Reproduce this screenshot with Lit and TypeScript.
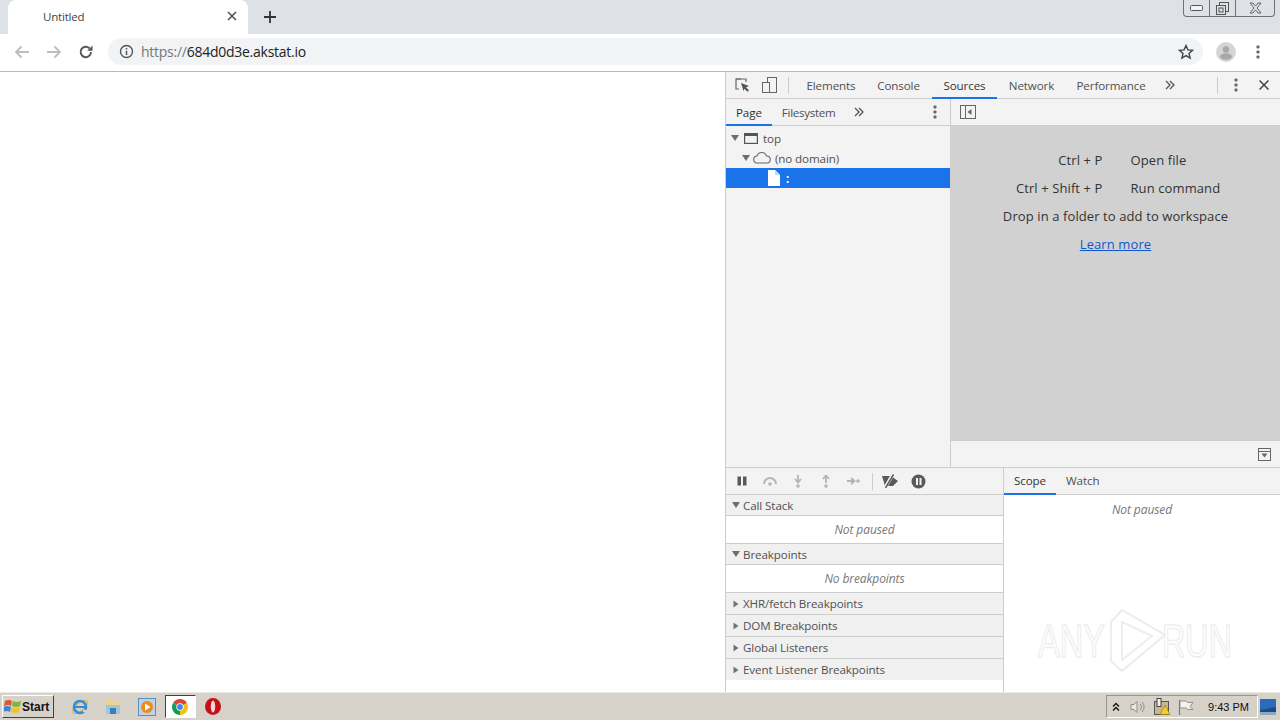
import { LitElement, html, css, svg } from "lit";
import { customElement } from "lit/decorators.js";

const triDown = html`<svg class="tri" width="8" height="8" viewBox="0 0 8 8"><path d="M0 1h8L4 7z" fill="#6e6e6e"/></svg>`;
const triRight = html`<svg class="tri" width="8" height="8" viewBox="0 0 8 8"><path d="M1.5 0.5v7L6.5 4z" fill="#727272"/></svg>`;
const dots = html`<svg width="4" height="14" viewBox="0 0 4 14"><g fill="#666"><rect x="0.5" y="0.5" width="3" height="3" rx="1"/><rect x="0.5" y="5.5" width="3" height="3" rx="1"/><rect x="0.5" y="10.5" width="3" height="3" rx="1"/></g></svg>`;
const chevrons = html`<svg width="10" height="10" viewBox="0 0 10 10"><path d="M1 1l4 4-4 4M5 1l4 4-4 4" fill="none" stroke="#555" stroke-width="1.3"/></svg>`;

const sections = [
  { label: "Call Stack", open: true, body: "Not paused" },
  { label: "Breakpoints", open: true, body: "No breakpoints" },
  { label: "XHR/fetch Breakpoints", open: false },
  { label: "DOM Breakpoints", open: false },
  { label: "Global Listeners", open: false },
  { label: "Event Listener Breakpoints", open: false },
];

const mainTabs = [
  { label: "Elements", w: 68 },
  { label: "Console", w: 67 },
  { label: "Sources", w: 65, on: true },
  { label: "Network", w: 69 },
  { label: "Performance", w: 90 },
];

@customElement("app-root")
export class AppRoot extends LitElement {
  static styles = css`
    :host { display: block; width: 1280px; height: 720px; overflow: hidden; position: relative; background: #fff;
      font-family: "Open Sans", "Noto Sans", sans-serif; font-size: 12px; color: #333; }
    .app { display: flex; flex-direction: column; height: 720px; }
    svg { display: block; flex: none; }

    .tabstrip { height: 34px; background: #dee1e6; display: flex; align-items: stretch; padding-left: 8px; flex: none; }
    .tab { width: 240px; background: #fff; border-radius: 8px 8px 0 0; display: flex; align-items: center; box-sizing: border-box; padding: 0 11px 2px 35px; color: #444; font-size: 11.5px; letter-spacing: -0.2px; }
    .tab span { flex: 1; }
    .newtab { margin-left: 16px; align-self: center; }

    .toolbar { height: 35px; padding-bottom: 2px; flex: none; background: #fff; border-bottom: 1px solid #b9b9b9; display: flex; align-items: center; padding-left: 14px; box-sizing: content-box; }
    .nav { display: flex; align-items: center; gap: 16px; }
    .omni { margin-left: 14px; width: 1095px; height: 27px; border-radius: 14px; background: #f1f3f4; display: flex; align-items: center; padding: 0 9px 0 11px; box-sizing: border-box; font-size: 14px; letter-spacing: -0.26px; color: #222; gap: 7px; }
    .omni .url { flex: 1; }
    .omni .url i { font-style: normal; color: #777; }
    .acct { margin-left: 13px; }
    .menu { margin-left: 20px; }

    .main { flex: 1; display: flex; min-height: 0; }
    .page { flex: 1; background: #fff; }
    .devtools { width: 555px; flex: none; border-left: 1px solid #cdcdcd; box-sizing: border-box; display: flex; flex-direction: column; background: #f3f3f3; color: #505050; font-size: 11.6px; letter-spacing: -0.1px; }

    .dt-top { height: 27px; flex: none; border-bottom: 1px solid #cdcdcd; box-sizing: border-box; display: flex; align-items: stretch; }
    .ico { display: flex; align-items: center; }
    .dt-icons { width: 62px; padding-left: 9px; gap: 12px; box-sizing: border-box; flex: none; }
    .sep { width: 1px; height: 17px; background: #ccc; align-self: center; flex: none; }
    .tabs { display: flex; align-items: stretch; }
    .t { display: flex; align-items: center; justify-content: center; padding: 1px 11px 0; box-sizing: border-box; border-bottom: 2px solid transparent; margin-bottom: -1px; white-space: nowrap; }
    .t.on { border-bottom-color: #1a73e8; color: #333; }
    .dt-tabs { margin-left: 8px; }
    .dt-tabs .t { padding: 1px 0 0; }
    .push { flex: 1; }
    .more { display: flex; align-items: center; padding: 0 0 0 9px; }
    .dt-end { display: flex; align-items: center; padding-right: 11px; }
    .dt-end .sep { margin-right: 16px; }
    .dt-end .x { margin-left: 21px; }

    .upper { height: 369px; flex: none; display: flex; border-bottom: 1px solid #cdcdcd; box-sizing: border-box; }
    .navigator { width: 224px; flex: none; border-right: 1px solid #cdcdcd; box-sizing: content-box; display: flex; flex-direction: column; }
    .subbar { height: 27px; flex: none; border-bottom: 1px solid #cdcdcd; box-sizing: border-box; display: flex; align-items: stretch; }
    .subbar .t { padding: 1px 10px 0; }
    .subbar .t.fs { letter-spacing: -0.3px; }
    .subbar .more { padding-left: 9px; }
    .subbar .dots { display: flex; align-items: center; padding-right: 13px; }
    .tree { padding-top: 2px; display: flex; flex-direction: column; }
    .row { height: 20px; display: flex; align-items: center; white-space: nowrap; }
    .row.r1 { padding-left: 5px; gap: 5px; }
    .row.r2 { padding-left: 16px; gap: 3px; }
    .row.r2 span { margin-left: 1px; }
    .row.sel { background: #1a73e8; color: #fff; padding-left: 42px; gap: 6px; font-weight: 700; }

    .editor { flex: 1; display: flex; flex-direction: column; min-width: 0; }
    .edbar { padding-left: 9px; align-items: center; }
    .welcome { flex: 1; background: #d1d1d1; display: flex; flex-direction: column; align-items: center; padding-top: 20px; color: #333; font-size: 13px; letter-spacing: 0.1px; }
    .shortcuts { display: grid; grid-template-columns: 127px 125px; column-gap: 28px; }
    .shortcuts div { height: 28px; line-height: 28px; white-space: nowrap; }
    .shortcuts .k { text-align: right; }
    .drop { height: 28px; line-height: 28px; }
    .learn { height: 28px; line-height: 28px; color: #1155cc; text-decoration: underline; }
    .edfoot { height: 27px; flex: none; border-top: 1px solid #cdcdcd; box-sizing: border-box; display: flex; align-items: center; justify-content: flex-end; padding-right: 9px; }

    .lower { flex: 1; display: flex; min-height: 0; }
    .left { width: 277px; flex: none; border-right: 1px solid #cdcdcd; display: flex; flex-direction: column; background: #fff; }
    .debugbar { height: 27px; flex: none; background: #f3f3f3; border-bottom: 1px solid #cdcdcd; box-sizing: border-box; display: flex; align-items: center; padding-left: 2px; }
    .debugbar .b { width: 28px; display: flex; justify-content: center; flex: none; }
    .debugbar .sep { margin: 0 3px 0 4px; }
    .sec { height: 22px; flex: none; box-sizing: border-box; background: #f0f0f0; border-bottom: 1px solid #cdcdcd; display: flex; align-items: center; padding-left: 6px; gap: 3px; color: #505050; }
    .sec.short { height: 21px; }
    .secbody { height: 28px; flex: none; box-sizing: border-box; background: #fff; border-bottom: 1px solid #cdcdcd; display: flex; align-items: center; justify-content: center; padding-bottom: 1px; font-style: italic; color: #777; font-size: 12px; }
    .sec.last { border-bottom: none; height: 21px; }
    .right { flex: 1; background: #fff; display: flex; flex-direction: column; }
    .rbar { height: 27px; flex: none; background: #f3f3f3; border-bottom: 1px solid #cdcdcd; box-sizing: border-box; display: flex; align-items: stretch; }
    .rbar .t { padding: 0 10px; }
    .rnote { text-align: center; font-style: italic; color: #777; font-size: 12px; padding-top: 6px; }

    .taskbar { height: 28px; flex: none; background: #d6d2c9; border-top: 1px solid #eceae4; box-sizing: border-box; display: flex; align-items: center; padding-left: 2px; color: #111; }
    .start { width: 52px; height: 23px; box-sizing: border-box; background: #d6d2c9; border: 1px solid; border-color: #fff #404040 #404040 #fff; display: flex; align-items: center; gap: 0; padding-left: 1px; font-family: "Liberation Sans", sans-serif; font-weight: 700; font-size: 12px; }
    .quick { display: flex; align-items: center; margin-left: 9px; gap: 0; }
    .q { width: 33.5px; display: flex; justify-content: center; }
    .q.active { width: 31px; height: 23px; margin: 0 1px; background: #fff; border: 1px solid; border-color: #404040 #fff #fff #404040; box-sizing: border-box; align-items: center; }
    .tray { margin-left: auto; width: 152px; height: 23px; border: 1px solid; border-color: #99958c #fff #fff #99958c; box-sizing: border-box; display: flex; align-items: center; padding-left: 5px; font-family: "Liberation Sans", sans-serif; font-size: 11px; }
    .tray .clock { margin-left: auto; padding-right: 8px; }
    .tray .speaker { margin-left: 10px; }
    .tray .net { margin-left: 8px; }
    .tray .flag { margin-left: 7px; }
    .desk { margin: 0 4px 0 2px; }

    .winbtns { position: absolute; top: 0; right: 5px; width: 92px; height: 17px; box-sizing: border-box; border: 1px solid #6f7175; border-top: none; border-radius: 0 0 4px 4px; display: flex; }
    .winbtns div { display: flex; align-items: center; justify-content: center; }
    .wb1 { width: 25px; border-right: 1px solid #6f7175; }
    .wb2 { width: 25px; border-right: 1px solid #6f7175; }
    .wb3 { flex: 1; }
    .mark { position: absolute; left: 1030px; top: 604px; pointer-events: none; }
    .mark text { font-family: "Liberation Sans", sans-serif; font-size: 47px; fill: none; stroke: #eeeeee; stroke-width: 1.5; }
  `;

  render() {
    return html`<div class="app">
      <div class="tabstrip">
        <div class="tab"><span>Untitled</span>
          <svg width="10" height="10" viewBox="0 0 10 10"><path d="M1 1l8 8M9 1l-8 8" stroke="#555" stroke-width="1.6"/></svg>
        </div>
        <svg class="newtab" width="12" height="12" viewBox="0 0 12 12"><path d="M6 0v12M0 6h12" stroke="#333" stroke-width="1.8"/></svg>
      </div>
      <div class="toolbar">
        <div class="nav">
          <svg width="16" height="14" viewBox="0 0 16 14"><path d="M15 7H2M7.500 1.500L2 7l5.500 5.500" fill="none" stroke="#bdbdbd" stroke-width="1.800"/></svg>
          <svg width="16" height="14" viewBox="0 0 16 14"><path d="M1 7h13M8.500 1.500L14 7l-5.500 5.500" fill="none" stroke="#bdbdbd" stroke-width="1.800"/></svg>
          <svg width="16" height="16" viewBox="0 0 16 16"><path d="M13 8a5.200 5.200 0 1 1-1.500-3.700" fill="none" stroke="#555" stroke-width="1.900"/><path d="M14.500 1.500v5.300H9.200z" fill="#555"/></svg>
        </div>
        <div class="omni">
          <svg width="15" height="15" viewBox="0 0 15 15"><circle cx="7.500" cy="7.500" r="6" fill="none" stroke="#555" stroke-width="1.400"/><path d="M7.500 6.700v4.200M7.500 4v1.600" stroke="#555" stroke-width="1.500"/></svg>
          <span class="url"><i>https://</i>684d0d3e.akstat.io</span>
          <svg width="16" height="16" viewBox="0 0 16 16"><path d="M8 1.500l1.900 4.400 4.700.4-3.600 3.100 1.100 4.600L8 11.600l-4.100 2.400 1.100-4.600-3.600-3.100 4.700-.4z" fill="none" stroke="#444" stroke-width="1.400"/></svg>
        </div>
        <svg class="acct" width="20" height="20" viewBox="0 0 20 20"><circle cx="10" cy="10" r="10" fill="#d5d5d5"/><circle cx="10" cy="7.500" r="3.200" fill="#a8a8a8"/><ellipse cx="10" cy="14.500" rx="6" ry="3.200" fill="#a8a8a8"/></svg>
        <span class="menu">${dots}</span>
      </div>
      <div class="main">
        <div class="page"></div>
        <div class="devtools">
          <div class="dt-top">
            <div class="ico dt-icons">
              <svg width="15" height="15" viewBox="0 0 15 15"><path d="M6 1H1v10h3" fill="none" stroke="#666" stroke-width="1.200"/><path d="M1 1h10v3" fill="none" stroke="#666" stroke-width="1.200"/><path d="M6 5l8 3-3 1.200 3 3-1.500 1.500-3-3L8.500 13z" fill="#555"/></svg>
              <svg width="15" height="16" viewBox="0 0 15 16"><rect x="5.500" y="0.500" width="9" height="15" fill="none" stroke="#666"/><rect x="0.500" y="5.500" width="7" height="10" fill="#f3f3f3" stroke="#666"/></svg>
            </div>
            <div class="sep"></div>
            <div class="tabs dt-tabs">
              ${mainTabs.map((t) => html`<div class="t ${t.on ? "on" : ""}" style="width:${t.w}px">${t.label}</div>`)}
            </div>
            <div class="more">${chevrons}</div>
            <div class="push"></div>
            <div class="dt-end"><div class="sep"></div>${dots}
              <svg class="x" width="10" height="10" viewBox="0 0 10 10"><path d="M0.500 0.500l9 9M9.500 0.500l-9 9" stroke="#444" stroke-width="1.500"/></svg>
            </div>
          </div>
          <div class="upper">
            <div class="navigator">
              <div class="subbar">
                <div class="tabs"><div class="t on">Page</div><div class="t fs">Filesystem</div></div>
                <div class="more">${chevrons}</div>
                <div class="push"></div>
                <div class="dots">${dots}</div>
              </div>
              <div class="tree">
                <div class="row r1">${triDown}
                  <svg width="14" height="11" viewBox="0 0 14 11"><rect x="0.600" y="0.600" width="12.800" height="9.800" fill="none" stroke="#555" stroke-width="1.200"/><rect x="1" y="1" width="12" height="2" fill="#555"/></svg>
                  <span>top</span></div>
                <div class="row r2">${triDown}
                  <svg width="18" height="12" viewBox="0 0 18 12"><path d="M4.500 11a3.500 3.500 0 0 1-.5-7A5 5 0 0 1 13.500 4a3.500 3.500 0 0 1 .5 7z" fill="none" stroke="#666" stroke-width="1.100"/></svg>
                  <span>(no domain)</span></div>
                <div class="row sel">
                  <svg width="12" height="16" viewBox="0 0 12 16"><path d="M0 0h7l5 5v11H0z" fill="#fff"/><path d="M7 0l5 5H7z" fill="#c4dafa"/></svg>
                  <span>:</span></div>
              </div>
            </div>
            <div class="editor">
              <div class="subbar edbar">
                <svg width="16" height="14" viewBox="0 0 16 14"><rect x="0.500" y="0.500" width="15" height="13" fill="none" stroke="#666"/><path d="M5.500 1v12" stroke="#666"/><path d="M11.500 4v6L7.500 7z" fill="#666"/></svg>
              </div>
              <div class="welcome">
                <div class="shortcuts">
                  <div class="k">Ctrl + P</div><div>Open file</div>
                  <div class="k">Ctrl + Shift + P</div><div>Run command</div>
                </div>
                <div class="drop">Drop in a folder to add to workspace</div>
                <div class="learn">Learn more</div>
              </div>
              <div class="edfoot">
                <svg width="13" height="13" viewBox="0 0 13 13"><rect x="0.500" y="0.500" width="12" height="12" fill="none" stroke="#666"/><path d="M1 3.500h11" stroke="#666"/><path d="M3.500 5.500h6L6.500 9.500z" fill="#666"/></svg>
              </div>
            </div>
          </div>
          <div class="lower">
            <div class="left">
              <div class="debugbar">
                <span class="b"><svg width="10" height="10" viewBox="0 0 10 10"><path d="M0.500 0.500h3.500v9H0.500zM6 0.500h3.500v9H6z" fill="#5a5a5a"/></svg></span>
                <span class="b"><svg width="16" height="10" viewBox="0 0 16 10"><path d="M2 8a6 6 0 0 1 12 0" fill="none" stroke="#b5b5b5" stroke-width="2"/><circle cx="8" cy="8" r="1.800" fill="#b5b5b5"/></svg></span>
                <span class="b"><svg width="10" height="13" viewBox="0 0 10 13"><path d="M5 0v6M2 4l3 3.500L8 4" fill="none" stroke="#b5b5b5" stroke-width="1.800"/><circle cx="5" cy="11" r="1.800" fill="#b5b5b5"/></svg></span>
                <span class="b"><svg width="10" height="13" viewBox="0 0 10 13"><path d="M5 8V2M2 4l3-3.500L8 4" fill="none" stroke="#b5b5b5" stroke-width="1.800"/><circle cx="5" cy="11" r="1.800" fill="#b5b5b5"/></svg></span>
                <span class="b"><svg width="14" height="10" viewBox="0 0 14 10"><path d="M0 5h6M4 2l3.500 3L4 8" fill="none" stroke="#b5b5b5" stroke-width="1.800"/><circle cx="11" cy="5" r="1.800" fill="#b5b5b5"/></svg></span>
                <div class="sep"></div>
                <span class="b"><svg width="18" height="14" viewBox="0 0 18 14"><path d="M1 2h9l7 5-5 5H4z" fill="#5a5a5a"/><path d="M12 0L4 14" stroke="#f3f3f3" stroke-width="3.500"/><path d="M12.500 0.500L4.500 14" stroke="#5a5a5a" stroke-width="1.500"/></svg></span>
                <span class="b"><svg width="15" height="15" viewBox="0 0 15 15"><circle cx="7.500" cy="7.500" r="7" fill="#5a5a5a"/><path d="M5 4h2v7H5zM8.500 4h2v7h-2z" fill="#f3f3f3"/></svg></span>
              </div>
              ${sections.map((s, i) => html`
                <div class="sec ${s.open ? "short" : ""} ${i === sections.length - 1 ? "last" : ""}">${s.open ? triDown : triRight}<span>${s.label}</span></div>
                ${s.body ? html`<div class="secbody">${s.body}</div>` : ""}
              `)}
            </div>
            <div class="right">
              <div class="rbar"><div class="tabs"><div class="t on">Scope</div><div class="t">Watch</div></div></div>
              <div class="rnote">Not paused</div>
            </div>
          </div>
        </div>
      </div>
      <div class="taskbar">
        <div class="start">
          <svg width="18" height="17" viewBox="0 0 18 17"><path d="M1 3q4-2 7 0l-1 5q-3-2-7 0z" fill="#e2562b"/><path d="M9 3q4 2 8 0l-1 5q-4 2-8 0z" fill="#7bb63c"/><path d="M0 9q3-2 7 0l-1 5q-3-2-7 0z" fill="#3c84d6"/><path d="M8 9q4 2 8 0l-1 5q-4 2-8 0z" fill="#f1c22d"/></svg>
          <span>Start</span>
        </div>
        <div class="quick">
          <span class="q"><svg width="18" height="18" viewBox="0 0 18 18"><ellipse cx="9" cy="9" rx="9" ry="4" transform="rotate(-40 9 9)" fill="none" stroke="#e7b43a" stroke-width="1.200"/><circle cx="9" cy="9" r="6" fill="none" stroke="#2f8fdc" stroke-width="2.600"/><path d="M3.500 9h11" stroke="#2f8fdc" stroke-width="2"/><path d="M12 13l4 0" stroke="#d6d2c9" stroke-width="2.500"/></svg></span>
          <span class="q"><svg width="16" height="17" viewBox="0 0 16 17"><path d="M1 2h5l1 2h8v12H1z" fill="#ecd38a"/><path d="M1 7h14v9H1z" fill="#9cc8df"/><rect x="5" y="10" width="6" height="6" fill="#3d7fb0"/></svg></span>
          <span class="q"><svg width="18" height="18" viewBox="0 0 18 18"><rect x="0.500" y="0.500" width="17" height="17" fill="#b9d4ea" stroke="#5b8fc0"/><circle cx="9" cy="9" r="6" fill="#ee8a1d"/><path d="M7 5.500v7L12.500 9z" fill="#fff"/></svg></span>
          <span class="q active"><svg width="16" height="16" viewBox="0 0 16 16"><path d="M8 8L1.100 4A8 8 0 0 1 14.900 4z" fill="#db4437"/><path d="M8 8l6.900-4A8 8 0 0 1 8 16z" fill="#f4c20d"/><path d="M8 8v8A8 8 0 0 1 1.100 4z" fill="#0f9d58"/><circle cx="8" cy="8" r="3.700" fill="#fff"/><circle cx="8" cy="8" r="2.900" fill="#4285f4"/></svg></span>
          <span class="q"><svg width="16" height="17" viewBox="0 0 16 17"><ellipse cx="8" cy="8.500" rx="8" ry="8.500" fill="#c4101a"/><ellipse cx="8" cy="8.500" rx="2.200" ry="6" fill="#f3d6d0"/></svg></span>
        </div>
        <div class="tray">
          <svg width="8" height="10" viewBox="0 0 8 10"><path d="M1 4.500l3-3 3 3M1 8.500l3-3 3 3" fill="none" stroke="#111" stroke-width="1.300"/></svg>
          <svg class="speaker" width="16" height="16" viewBox="0 0 16 16"><path d="M1 5.500h3l3-3v11l-3-3H1z" fill="#e8e6e0" stroke="#8f8f8f"/><path d="M10 5a4 4 0 0 1 0 6M12 3a7 7 0 0 1 0 10" fill="none" stroke="#8f8f8f"/></svg>
          <svg class="net" width="17" height="17" viewBox="0 0 17 17"><rect x="0.500" y="3.500" width="14" height="13" fill="#c9b98a" stroke="#555"/><rect x="3" y="0.500" width="4" height="8" fill="#eee" stroke="#444"/><path d="M11 7l5 9.500H6z" fill="#f2cf2a" stroke="#8a7414" stroke-width="0.600"/></svg>
          <svg class="flag" width="16" height="16" viewBox="0 0 16 16"><path d="M1.500 1v15" stroke="#777" stroke-width="1.200"/><path d="M2 2h6l2 1.500h5L12 7.500l3 3H10L8 9H2z" fill="#f4f2ec" stroke="#8f8f8f"/></svg>
          <span class="clock">9:43 PM</span>
        </div>
        <svg class="desk" width="16" height="16" viewBox="0 0 16 16"><rect width="16" height="16" fill="#2a6cb8"/><path d="M0 11l16-3v8H0z" fill="#174d8f"/><rect y="13" width="16" height="3" fill="#8ea7bd"/></svg>
      </div>
    </div>
    <div class="winbtns">
      <div class="wb1"><svg width="13" height="6" viewBox="0 0 13 6"><rect x="0.500" y="0.500" width="12" height="5" rx="1" fill="#f2f3f5" stroke="#555"/></svg></div>
      <div class="wb2"><svg width="13" height="13" viewBox="0 0 13 13"><rect x="3.500" y="0.500" width="9" height="9" fill="none" stroke="#555"/><rect x="0.500" y="3.500" width="9" height="9" fill="#dee1e6" stroke="#555"/><rect x="3" y="6" width="4" height="4" fill="none" stroke="#555"/></svg></div>
      <div class="wb3"><svg width="13" height="12" viewBox="0 0 13 12"><path d="M1 1h3l2.500 3L9 1h3L8 6l4 5H9L6.500 8 4 11H1l4-5z" fill="none" stroke="#666"/></svg></div>
    </div>
    <svg class="mark" width="250" height="72" viewBox="0 0 250 72">
      ${svg`<text x="8" y="53" textLength="67" lengthAdjust="spacingAndGlyphs">ANY</text>
      <text x="132" y="53" textLength="70" lengthAdjust="spacingAndGlyphs">RUN</text>
      <path d="M81 18L92 6l43 25-43 36-11-10z" fill="none" stroke="#ececec" stroke-width="2"/>
      <path d="M81 18V57M92 18l30 14-30 24z" fill="none" stroke="#eeeeee" stroke-width="2"/>`}
    </svg>`;
  }
}
